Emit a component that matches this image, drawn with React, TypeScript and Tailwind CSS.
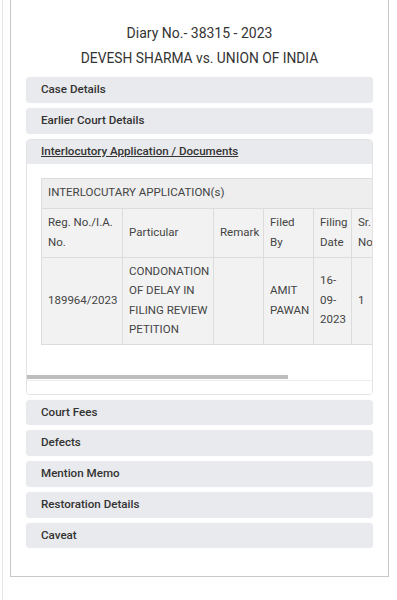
import React from "react";

const Acc = ({ label }: { label: string }) => (
  <div className="h-[25.75px] rounded-[4px] bg-[#e9eaed] flex items-center pl-[15px] text-[11.6px] font-medium text-[#333] shadow-[0_0_1px_rgba(0,0,0,0.08)]">
    {label}
  </div>
);

export default function App() {
  const cell = "border border-[#dcdcdc] px-[6px] py-[4px] align-middle text-left font-normal";
  return (
    <div className="w-[397px] h-[600px] bg-white overflow-hidden" style={{ fontFamily: "Roboto, 'Noto Sans', sans-serif" }}>
      <div className="ml-[2px] h-[600px] border-l border-[#e4e4e4]">
        <div className="ml-[7px] w-[379px] h-[577px] border-x border-b border-[#c9c9c9] px-[15px] pt-[21px]">
          <div className="text-center text-[14px] leading-[25px] text-[#333]">Diary No.- 38315 - 2023</div>
          <div className="text-center text-[13.8px] leading-[25px] text-[#333]">DEVESH SHARMA vs. UNION OF INDIA</div>
          <div className="mt-[6px] flex flex-col gap-[5px]">
            <Acc label="Case Details" />
            <Acc label="Earlier Court Details" />
            <div className="rounded-[4px] border border-[#e3e3e3] overflow-hidden">
              <div className="h-[24px] bg-[#e9eaed] flex items-center pl-[14px] text-[11.6px] font-medium text-[#333] underline">
                Interlocutory Application / Documents
              </div>
              <div className="bg-white">
                <div className="relative overflow-hidden pl-[14px] pt-[14px] pb-[35px] border-b border-[#ececec]">
                  <table className="table-fixed border-collapse w-[340px] text-[11.5px] leading-[19.5px] text-[#444] bg-[#f2f2f2]">
                    <colgroup>
                      <col className="w-[81px]" />
                      <col className="w-[91px]" />
                      <col className="w-[50px]" />
                      <col className="w-[50px]" />
                      <col className="w-[38px]" />
                      <col className="w-[30px]" />
                    </colgroup>
                    <tbody>
                      <tr className="bg-[#eeeeee] h-[30px]">
                        <td colSpan={6} className={cell}>INTERLOCUTARY APPLICATION(s)</td>
                      </tr>
                      <tr className="h-[49px]">
                        <td className={cell}>Reg. No./I.A. No.</td>
                        <td className={cell}>Particular</td>
                        <td className={cell + " pr-0 whitespace-nowrap"}>Remark</td>
                        <td className={cell}>Filed By</td>
                        <td className={cell}>Filing Date</td>
                        <td className={cell}>Sr. No</td>
                      </tr>
                      <tr className="h-[86px]">
                        <td className={cell + " pr-0"}>189964/2023</td>
                        <td className={cell + " pr-0"}>CONDONATION OF DELAY IN FILING REVIEW PETITION</td>
                        <td className={cell}></td>
                        <td className={cell + " pr-0"}>AMIT PAWAN</td>
                        <td className={cell}>16-09-2023</td>
                        <td className={cell}>1</td>
                      </tr>
                    </tbody>
                  </table>
                  <div className="absolute left-0 bottom-[1px] w-[261px] h-[4px] bg-[#bdbdbd]" />
                </div>
                <div className="h-[13px]" />
              </div>
            </div>
            <Acc label="Court Fees" />
            <Acc label="Defects" />
            <Acc label="Mention Memo" />
            <Acc label="Restoration Details" />
            <Acc label="Caveat" />
          </div>
        </div>
      </div>
    </div>
  );
}
